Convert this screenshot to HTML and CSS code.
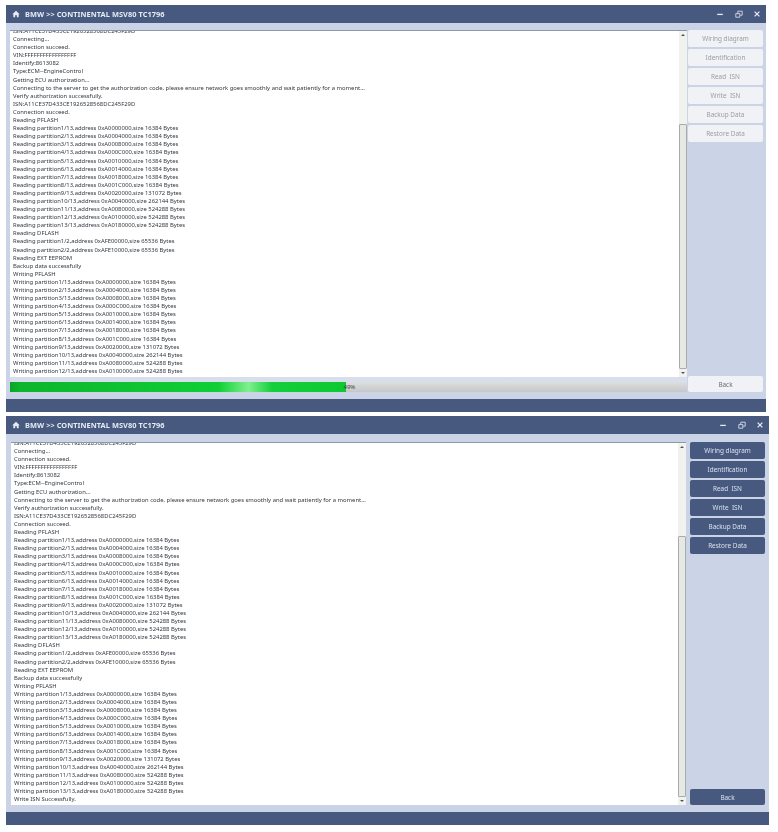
FILE: index.html
```html
<!DOCTYPE html>
<html lang="en">
<head>
<meta charset="utf-8">
<title>BMW >> CONTINENTAL MSV80 TC1796</title>
<link rel="stylesheet" href="styles.css">
</head>
<body>
<section class="window window-busy">
  <header class="titlebar">
    <svg class="home" viewBox="0 0 12 12"><path d="M6 1 L11.5 6.2 L10 6.2 L10 11 L7.3 11 L7.3 7.8 L4.7 7.8 L4.7 11 L2 11 L2 6.2 L.5 6.2 Z"/></svg>
    <h1 class="title">BMW &gt;&gt; CONTINENTAL MSV80 TC1796</h1>
    <div class="controls">
      <svg viewBox="0 0 10 10"><path d="M1.5 5.5H8.5"/></svg>
      <svg viewBox="0 0 10 10"><path class="thin" d="M1 4.5H6V9H1ZM3.5 4V1.5H9V6.5H6.5"/></svg>
      <svg viewBox="0 0 10 10"><path d="M2 2L8 8M8 2L2 8"/></svg>
    </div>
  </header>
  <div class="content">
    <div class="left">
      <div class="logbox">
        <div class="log">
          <p class="clip">ISN:A11CE37D433CE1926528568DC245F29D</p>
          <p>Connecting...</p><p>Connection succeed.</p><p>VIN:FFFFFFFFFFFFFFFFF</p><p>Identify:8613082</p><p>Type:ECM--EngineControl</p><p>Getting ECU authorization...</p>
          <p>Connecting to the server to get the authorization code, please ensure network goes smoothly and wait patiently for a moment...</p>
          <p>Verify authorization successfully.</p><p>ISN:A11CE37D433CE1926528568DC245F29D</p><p>Connection succeed.</p><p>Reading PFLASH</p>
          <p>Reading partition1/13,address 0xA0000000,size 16384 Bytes</p><p>Reading partition2/13,address 0xA0004000,size 16384 Bytes</p><p>Reading partition3/13,address 0xA0008000,size 16384 Bytes</p><p>Reading partition4/13,address 0xA000C000,size 16384 Bytes</p><p>Reading partition5/13,address 0xA0010000,size 16384 Bytes</p><p>Reading partition6/13,address 0xA0014000,size 16384 Bytes</p><p>Reading partition7/13,address 0xA0018000,size 16384 Bytes</p><p>Reading partition8/13,address 0xA001C000,size 16384 Bytes</p><p>Reading partition9/13,address 0xA0020000,size 131072 Bytes</p><p>Reading partition10/13,address 0xA0040000,size 262144 Bytes</p><p>Reading partition11/13,address 0xA0080000,size 524288 Bytes</p><p>Reading partition12/13,address 0xA0100000,size 524288 Bytes</p><p>Reading partition13/13,address 0xA0180000,size 524288 Bytes</p>
          <p>Reading DFLASH</p><p>Reading partition1/2,address 0xAFE00000,size 65536 Bytes</p><p>Reading partition2/2,address 0xAFE10000,size 65536 Bytes</p><p>Reading EXT EEPROM</p><p>Backup data successfully</p><p>Writing PFLASH</p>
          <p>Writing partition1/13,address 0xA0000000,size 16384 Bytes</p><p>Writing partition2/13,address 0xA0004000,size 16384 Bytes</p><p>Writing partition3/13,address 0xA0008000,size 16384 Bytes</p><p>Writing partition4/13,address 0xA000C000,size 16384 Bytes</p><p>Writing partition5/13,address 0xA0010000,size 16384 Bytes</p><p>Writing partition6/13,address 0xA0014000,size 16384 Bytes</p><p>Writing partition7/13,address 0xA0018000,size 16384 Bytes</p><p>Writing partition8/13,address 0xA001C000,size 16384 Bytes</p><p>Writing partition9/13,address 0xA0020000,size 131072 Bytes</p><p>Writing partition10/13,address 0xA0040000,size 262144 Bytes</p><p>Writing partition11/13,address 0xA0080000,size 524288 Bytes</p><p>Writing partition12/13,address 0xA0100000,size 524288 Bytes</p>
        </div>
        <div class="scrollbar">
          <span class="arrow up"></span>
          <span class="track"><span class="thumb"></span></span>
          <span class="arrow down"></span>
        </div>
      </div>
      <div class="progress">
        <div class="progress-fill"></div>
        <span class="progress-label">49%</span>
      </div>
    </div>
    <aside class="actions">
      <button class="btn" type="button">Wiring diagram</button>
      <button class="btn" type="button">Identification</button>
      <button class="btn" type="button">Read &nbsp;ISN</button>
      <button class="btn" type="button">Write &nbsp;ISN</button>
      <button class="btn" type="button">Backup Data</button>
      <button class="btn" type="button">Restore Data</button>
      <button class="btn back" type="button">Back</button>
    </aside>
  </div>
  <footer class="statusbar"></footer>
</section>

<section class="window window-done">
  <header class="titlebar">
    <svg class="home" viewBox="0 0 12 12"><path d="M6 1 L11.5 6.2 L10 6.2 L10 11 L7.3 11 L7.3 7.8 L4.7 7.8 L4.7 11 L2 11 L2 6.2 L.5 6.2 Z"/></svg>
    <h1 class="title">BMW &gt;&gt; CONTINENTAL MSV80 TC1796</h1>
    <div class="controls">
      <svg viewBox="0 0 10 10"><path d="M1.5 5.5H8.5"/></svg>
      <svg viewBox="0 0 10 10"><path class="thin" d="M1 4.5H6V9H1ZM3.5 4V1.5H9V6.5H6.5"/></svg>
      <svg viewBox="0 0 10 10"><path d="M2 2L8 8M8 2L2 8"/></svg>
    </div>
  </header>
  <div class="content">
    <div class="left">
      <div class="logbox">
        <div class="log">
          <p class="clip">ISN:A11CE37D433CE1926528568DC245F29D</p>
          <p>Connecting...</p><p>Connection succeed.</p><p>VIN:FFFFFFFFFFFFFFFFF</p><p>Identify:8613082</p><p>Type:ECM--EngineControl</p><p>Getting ECU authorization...</p>
          <p>Connecting to the server to get the authorization code, please ensure network goes smoothly and wait patiently for a moment...</p>
          <p>Verify authorization successfully.</p><p>ISN:A11CE37D433CE1926528568DC245F29D</p><p>Connection succeed.</p><p>Reading PFLASH</p>
          <p>Reading partition1/13,address 0xA0000000,size 16384 Bytes</p><p>Reading partition2/13,address 0xA0004000,size 16384 Bytes</p><p>Reading partition3/13,address 0xA0008000,size 16384 Bytes</p><p>Reading partition4/13,address 0xA000C000,size 16384 Bytes</p><p>Reading partition5/13,address 0xA0010000,size 16384 Bytes</p><p>Reading partition6/13,address 0xA0014000,size 16384 Bytes</p><p>Reading partition7/13,address 0xA0018000,size 16384 Bytes</p><p>Reading partition8/13,address 0xA001C000,size 16384 Bytes</p><p>Reading partition9/13,address 0xA0020000,size 131072 Bytes</p><p>Reading partition10/13,address 0xA0040000,size 262144 Bytes</p><p>Reading partition11/13,address 0xA0080000,size 524288 Bytes</p><p>Reading partition12/13,address 0xA0100000,size 524288 Bytes</p><p>Reading partition13/13,address 0xA0180000,size 524288 Bytes</p>
          <p>Reading DFLASH</p><p>Reading partition1/2,address 0xAFE00000,size 65536 Bytes</p><p>Reading partition2/2,address 0xAFE10000,size 65536 Bytes</p><p>Reading EXT EEPROM</p><p>Backup data successfully</p><p>Writing PFLASH</p>
          <p>Writing partition1/13,address 0xA0000000,size 16384 Bytes</p><p>Writing partition2/13,address 0xA0004000,size 16384 Bytes</p><p>Writing partition3/13,address 0xA0008000,size 16384 Bytes</p><p>Writing partition4/13,address 0xA000C000,size 16384 Bytes</p><p>Writing partition5/13,address 0xA0010000,size 16384 Bytes</p><p>Writing partition6/13,address 0xA0014000,size 16384 Bytes</p><p>Writing partition7/13,address 0xA0018000,size 16384 Bytes</p><p>Writing partition8/13,address 0xA001C000,size 16384 Bytes</p><p>Writing partition9/13,address 0xA0020000,size 131072 Bytes</p><p>Writing partition10/13,address 0xA0040000,size 262144 Bytes</p><p>Writing partition11/13,address 0xA0080000,size 524288 Bytes</p><p>Writing partition12/13,address 0xA0100000,size 524288 Bytes</p><p>Writing partition13/13,address 0xA0180000,size 524288 Bytes</p><p>Write ISN Successfully.</p>
        </div>
        <div class="scrollbar">
          <span class="arrow up"></span>
          <span class="track"><span class="thumb"></span></span>
          <span class="arrow down"></span>
        </div>
      </div>
    </div>
    <aside class="actions">
      <button class="btn" type="button">Wiring diagram</button>
      <button class="btn" type="button">Identification</button>
      <button class="btn" type="button">Read &nbsp;ISN</button>
      <button class="btn" type="button">Write &nbsp;ISN</button>
      <button class="btn" type="button">Backup Data</button>
      <button class="btn" type="button">Restore Data</button>
      <button class="btn back" type="button">Back</button>
    </aside>
  </div>
  <footer class="statusbar"></footer>
</section>
</body>
</html>
```

FILE: styles.css
```css
* { box-sizing: border-box; }
html, body { margin: 0; background: #fff; }
body {
  padding: 5px 0 0 6px;
  height: 832px;
  overflow: hidden;
  font-family: "Noto Sans", "Liberation Sans", sans-serif;
}
p, h1 { margin: 0; }

.window {
  display: flex;
  flex-direction: column;
  background: #cbd3e6;
}
.window-busy { width: 760px; height: 407px; margin-bottom: 4px; }
.window-done { width: 763px; height: 409px; }

.titlebar {
  flex: none;
  height: 18px;
  display: flex;
  align-items: center;
  padding: 0 5px 0 6px;
  background: #47597f;
  color: #e6ebf4;
}
.home { width: 8px; height: 8px; fill: #e6ebf4; margin-right: 5px; }
.title { flex: 1; font-size: 7.4px; font-weight: 700; letter-spacing: 0.05px; white-space: nowrap; filter: blur(0.2px); }
.controls { display: flex; gap: 10.5px; }
.controls svg {
  width: 8px; height: 8px;
  fill: none; stroke: #e6ebf4; stroke-width: 1.6;
}
.controls .thin { stroke-width: 1; }

.content {
  flex: 1;
  min-height: 0;
  display: flex;
  padding-top: 7px;
  padding-left: 4px;
}
.window-done .content { padding-top: 8px; }
.left { display: flex; flex-direction: column; min-width: 0; }
.window-busy .left { width: 677px; }
.window-done .left { width: 676px; padding-left: 1px; }

.logbox {
  flex: none;
  display: flex;
  background: #fff;
  border-top: 1px solid #8f98a6;
  height: 347px;
  overflow: hidden;
}
.window-done .logbox { height: 363px; }
.log {
  flex: 1;
  min-width: 0;
  overflow: hidden;
  padding-left: 3px;
  margin-top: -4px;
  font-size: 5.87px;
  line-height: 8.1px;
  color: #33383f;
  white-space: nowrap;
  filter: blur(0.25px);
}
.scrollbar {
  flex: none;
  width: 8px;
  display: flex;
  flex-direction: column;
  background: #f1f2ee;
}
.arrow { flex: none; height: 8px; position: relative; }
.arrow::after {
  content: "";
  position: absolute;
  left: 2px;
  top: 3px;
  border-left: 2px solid transparent;
  border-right: 2px solid transparent;
}
.up::after { border-bottom: 2px solid #555; }
.down::after { border-top: 2px solid #555; }
.track { flex: 1; padding-top: 85px; display: flex; }
.thumb {
  flex: 1;
  background: #e6e8e4;
  border: 1px solid #a9adaa;
  border-radius: 1px;
}

.progress {
  position: relative;
  flex: none;
  height: 15px;
  border-top: 5px solid #d8deeb;
  background: linear-gradient(#dcdfdf, #c5c8c6);
}
.progress-fill {
  width: 49.7%;
  height: 100%;
  background: linear-gradient(90deg, #0aa428 0, #0db52c 3%, #0fcf35 62%, #7ef08f 71%, #15cf3a 78%, #0ec832 100%);
}
.progress-label {
  position: absolute;
  left: 49.7%;
  top: 1px;
  margin-left: -3px;
  font-size: 6px;
  line-height: 8px;
  color: #444;
}

.actions {
  flex: none;
  width: 75px;
  display: flex;
  flex-direction: column;
  gap: 2px;
  margin-left: 1px;
}
.window-done .actions { margin-left: 4px; padding-bottom: 7px; }
.btn {
  flex: none;
  height: 17px;
  padding: 0;
  border: 0;
  border-radius: 2px;
  font-family: inherit;
  font-size: 6.4px;
  filter: blur(0.2px);
}
.back { margin-top: auto; margin-bottom: 7px; height: 16px; }
.window-done .back { margin-bottom: 0; }
.window-busy .btn { background: #f0f2f5; color: #9a9da3; }
.window-done .btn { background: #47597f; color: #d9e0ee; }
.window-busy .back { color: #6d7077; }

.statusbar { flex: none; height: 13px; background: #47597f; }
```
